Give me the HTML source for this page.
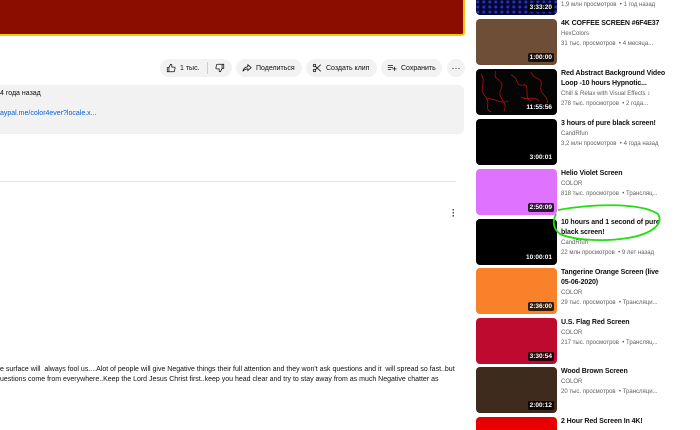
<!DOCTYPE html>
<html><head><meta charset="utf-8"><style>
*{margin:0;padding:0;box-sizing:border-box}
html,body{width:700px;height:430px;overflow:hidden}
body{background:#fff;font-family:"Liberation Sans",Arial,sans-serif;position:relative;color:#0f0f0f}
.a{position:absolute}
.vid{left:0;top:0;width:465px;height:36px;background:#8a0d00;border-right:2px solid #f5c518;border-bottom:2px solid #f5c518;border-bottom-right-radius:3px}
.btn{position:absolute;top:59px;height:18px;background:#f2f2f2;border-radius:9px;font-size:7px;color:#0f0f0f;display:flex;align-items:center;white-space:nowrap}
.btn svg{width:10px;height:10px;margin-right:4px}
.desc{left:0;top:85px;width:464px;height:49px;background:#f2f2f2;border-radius:0 6px 6px 0}
.th{position:absolute;left:476px;width:81px;height:46px;border-radius:4px;overflow:hidden}
.dur{position:absolute;right:3px;bottom:3px;background:rgba(0,0,0,.8);color:#fff;font-size:6.5px;font-weight:bold;padding:1px 2px;border-radius:2px}
.t{position:absolute;left:561px;width:115px;font-size:7px;line-height:10px;color:#0f0f0f;letter-spacing:-0.1px}
.t b{font-weight:bold;display:block;width:110px}
.m{font-weight:normal;color:#606060;font-size:6px;line-height:10px;white-space:nowrap;letter-spacing:0}
.cm{left:0;font-size:7px;color:#0f0f0f;white-space:nowrap}
</style></head><body>
<div class="a vid"></div>

<div class="btn" style="left:160px;width:72px;padding-left:6px">
<svg viewBox="0 0 24 24" fill="none" stroke="#0f0f0f" stroke-width="1.8"><path d="M7 11v10H3V11zM7 11l4-8c2 0 3 1 3 3v4h6c1 0 2 1 2 2l-2 8c0 1-1 1-2 1H7"/></svg>1 тыс.
<span style="width:1px;height:12px;background:#ccc;margin:0 7px"></span>
<svg viewBox="0 0 24 24" fill="none" stroke="#0f0f0f" stroke-width="1.8"><path d="M17 13V3h4v10zM17 13l-4 8c-2 0-3-1-3-3v-4H4c-1 0-2-1-2-2l2-8c0-1 1-1 2-1h11"/></svg></div>
<div class="btn" style="left:236px;width:66px;padding-left:6px"><svg viewBox="0 0 24 24" fill="none" stroke="#0f0f0f" stroke-width="1.8"><path d="M14 4l8 7-8 7v-4c-6 0-9 2-12 6 1-6 4-10 12-11z"/></svg>Поделиться</div>
<div class="btn" style="left:306px;width:71px;padding-left:6px"><svg viewBox="0 0 24 24" fill="none" stroke="#0f0f0f" stroke-width="1.8"><circle cx="6" cy="6" r="3"/><circle cx="6" cy="18" r="3"/><path d="M8 8l13 12M8 16L21 4"/></svg>Создать клип</div>
<div class="btn" style="left:381px;width:61px;padding-left:6px"><svg viewBox="0 0 24 24" fill="none" stroke="#0f0f0f" stroke-width="1.8"><path d="M2 6h12M2 11h12M2 16h8M18 9v10M13 14h10"/></svg>Сохранить</div>
<div class="btn" style="left:447px;width:18px;justify-content:center;font-size:9px">···</div>

<div class="a desc"></div>
<div class="a" style="left:0;top:90px;font-size:7px">4 года назад</div>
<div class="a" style="left:0;top:110px;font-size:7px;color:#065fd4">aypal.me/color4ever?locale.x...</div>

<div class="a" style="left:0;top:181px;width:456px;height:1px;background:#e5e5e5"></div>
<div class="a" style="left:452px;top:209px;width:3px;font-size:9px;font-weight:bold;line-height:3px">·<br>·<br>·</div>

<div class="a cm" style="top:366px">e surface will&nbsp; always fool us....Alot of people will give Negative things their full attention and they won't ask questions and it&nbsp; will spread so fast..but</div>
<div class="a cm" style="top:376px">uestions come from everywhere..Keep the Lord Jesus Christ first..keep you head clear and try to stay away from as much Negative chatter as</div>

<div class="th" style="top:-31px;background:#06062a"><div style="position:absolute;inset:0;background:radial-gradient(circle at 30% 60%,#2233cc 0 1px,transparent 2px) 0 0/6px 5px"></div><span class="dur">3:33:20</span></div>
<div class="t" style="top:0"><div class="m">1,9 млн просмотров &nbsp;• 1 год назад</div></div>

<div class="th" style="top:19px;background:#6f4e37"><span class="dur">1:00:00</span></div>
<div class="t" style="top:19px"><b>4K COFFEE SCREEN #6F4E37</b><div class="m">HexColors</div><div class="m">31 тыс. просмотров &nbsp;• 4 месяца...</div></div>

<div class="th" style="top:69px;background:#050505"><svg width="81" height="46" style="position:absolute"><path d="M5 5c6 8-3 14 4 22s-2 12 6 16M20 2c-5 10 10 8 5 18s8 12 3 22M35 6c8 2 4 12 12 10s0 14 8 16M55 3c3 9 12 4 10 14s8 8 6 18M10 30c8-2 14 6 22 2M45 28c6 4 12-2 18 4" stroke="#b01010" stroke-width="0.8" fill="none"/></svg><span class="dur">11:55:56</span></div>
<div class="t" style="top:69px"><b style="width:115px">Red Abstract Background Video Loop -10 hours Hypnotic...</b><div class="m">Chill &amp; Relax with Visual Effects ♪</div><div class="m">278 тыс. просмотров &nbsp;• 2 года...</div></div>

<div class="th" style="top:119px;background:#000"><span class="dur">3:00:01</span></div>
<div class="t" style="top:119px"><b>3 hours of pure black screen!</b><div class="m">CandRfun</div><div class="m">3,2 млн просмотров &nbsp;• 4 года назад</div></div>

<div class="th" style="top:169px;background:#df73ff"><span class="dur">2:50:09</span></div>
<div class="t" style="top:169px"><b>Helio Violet Screen</b><div class="m">COLOR</div><div class="m">818 тыс. просмотров &nbsp;• Трансляц...</div></div>

<div class="th" style="top:219px;background:#000"><span class="dur">10:00:01</span></div>
<div class="t" style="top:218px"><b>10 hours and 1 second of pure black screen!</b><div class="m">CandRfun</div><div class="m">22 млн просмотров &nbsp;• 9 лет назад</div></div>

<div class="th" style="top:268px;background:#f9812a"><span class="dur">2:36:00</span></div>
<div class="t" style="top:268px"><b>Tangerine Orange Screen (live<br>05-06-2020)</b><div class="m">COLOR</div><div class="m">29 тыс. просмотров &nbsp;• Трансляци...</div></div>

<div class="th" style="top:318px;background:#bf0a30"><span class="dur">3:30:54</span></div>
<div class="t" style="top:318px"><b>U.S. Flag Red Screen</b><div class="m">COLOR</div><div class="m">217 тыс. просмотров &nbsp;• Трансляц...</div></div>

<div class="th" style="top:367px;background:#3f2a1e"><span class="dur">2:00:12</span></div>
<div class="t" style="top:367px"><b>Wood Brown Screen</b><div class="m">COLOR</div><div class="m">20 тыс. просмотров &nbsp;• Трансляци...</div></div>

<div class="th" style="top:417px;height:13px;border-radius:4px 4px 0 0;background:#e80000"></div>
<div class="t" style="top:417px"><b>2 Hour Red Screen In 4K!</b></div>

<svg class="a" style="left:550px;top:202px" width="115" height="45"><path d="M8 8C40 2 90 0 108 12c6 10-6 20-30 24-25 4-55 2-68-4C2 26 3 18 6 12" stroke="#22dd11" stroke-width="1.8" fill="none"/></svg>
</body></html>
